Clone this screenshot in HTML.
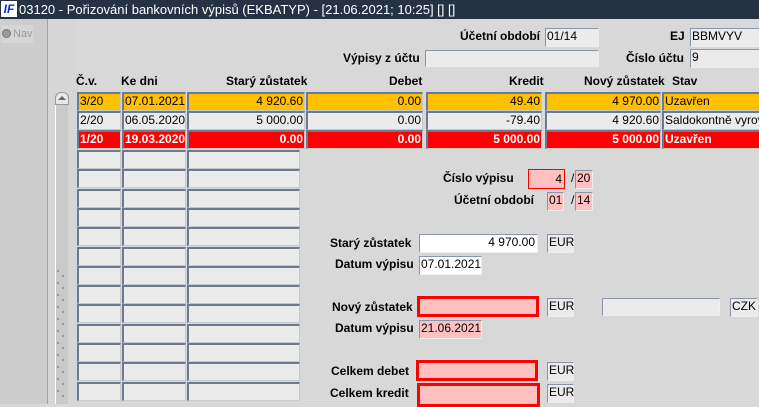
<!DOCTYPE html><html><head><meta charset="utf-8"><style>
*{margin:0;padding:0;box-sizing:border-box}
body{width:759px;height:404px;overflow:hidden;background:#d8d8d8;font-family:"Liberation Sans",sans-serif;font-size:12px;position:relative;color:#000}
.a{position:absolute}
.t{position:absolute;top:0;left:0;width:759px;height:19px;background:#243244;color:#fff;font-size:13px;line-height:19px;padding-left:19px;white-space:nowrap}
.lg{position:absolute;left:1px;top:1px;width:16px;height:16px;background:#fff;color:#1030c0;font:bold italic 12px "Liberation Sans";line-height:16px;text-align:center}
.c{position:absolute;height:19px;border-top:2px solid #6b7a90;border-left:2px solid #6b7a90;border-right:1px solid #c8c8c8;border-bottom:1px solid #c8c8c8;background:#ebebeb;line-height:15px;padding:0 1px;white-space:nowrap;overflow:visible}
.r{text-align:right}
.y{background:#ffc000}
.rd{background:#ff0000;color:#fff;font-weight:bold}
.b{font-weight:bold;position:absolute;white-space:nowrap}
.pk{background:#ffc0c0}
.red3{position:absolute;border:3px solid #f00;background:#ffc0c0}
.f{border-width:1px;border-color:#8a96a8 #eee #eee #8a96a8;padding:0 1px}
</style></head><body>
<div class="t"><div class="lg">IF</div>03120 - Pořizování bankovních výpisů (EKBATYP) - [21.06.2021; 10:25] [] []</div>
<div class="a" style="left:0;top:19px;width:47px;height:385px;background:#cdcdcd"></div>
<div class="a" style="left:47px;top:19px;width:1px;height:385px;background:#9aa4b0"></div>
<div class="a" style="left:1px;top:25px;width:32px;height:18px;background:#d6d6d6;color:#999;line-height:18px;font-size:11px;white-space:nowrap"><span style="display:inline-block;width:9px;height:9px;border-radius:50%;background:#999;border:1px solid #777;vertical-align:-1px;margin:0 2px 0 1px"></span>Nav</div>
<div class="a" style="left:48px;top:19px;width:29px;height:385px;background:#d6d6d6"></div>
<div class="a" style="left:55px;top:104px;width:1px;height:300px;background:#fff"></div>
<div class="a" style="left:56px;top:104px;width:12px;height:300px;background:#c9c9c9"></div>
<div class="a" style="left:55px;top:92px;width:14px;height:13px;background:#e8e8e8;border:1px solid #999;border-radius:6px 6px 0 0"><div style="margin:3px auto 0;width:0;height:0;border-left:4px solid transparent;border-right:4px solid transparent;border-bottom:4px solid #5a6a80"></div></div>
<svg class="a" style="left:57px;top:270px" width="10" height="134">
<g fill="#999">
<rect x="0" y="0" width="2" height="2"/><rect x="5" y="5" width="2" height="2"/><rect x="0" y="12" width="2" height="2"/><rect x="5" y="17" width="2" height="2"/><rect x="0" y="24" width="2" height="2"/><rect x="5" y="29" width="2" height="2"/><rect x="0" y="36" width="2" height="2"/><rect x="5" y="41" width="2" height="2"/><rect x="0" y="48" width="2" height="2"/><rect x="5" y="53" width="2" height="2"/><rect x="0" y="60" width="2" height="2"/><rect x="5" y="65" width="2" height="2"/><rect x="0" y="72" width="2" height="2"/><rect x="5" y="77" width="2" height="2"/><rect x="0" y="84" width="2" height="2"/><rect x="5" y="89" width="2" height="2"/><rect x="0" y="96" width="2" height="2"/><rect x="5" y="101" width="2" height="2"/><rect x="0" y="108" width="2" height="2"/><rect x="5" y="113" width="2" height="2"/><rect x="0" y="120" width="2" height="2"/><rect x="5" y="125" width="2" height="2"/></g></svg>

<div class="b" style="left:460px;top:29px">Účetní období</div>
<div class="c f" style="left:545px;top:28px;width:54px">01/14</div>
<div class="b" style="left:670px;top:29px">EJ</div>
<div class="c f" style="left:690px;top:28px;width:72px">BBMVYV</div>
<div class="b" style="left:343px;top:51px">Výpisy z účtu</div>
<div class="c f" style="left:425px;top:50px;width:174px;height:17px"></div>
<div class="b" style="left:626px;top:51px">Číslo účtu</div>
<div class="c f" style="left:690px;top:49px;width:72px">9</div>

<div class="b" style="left:76px;top:74px">Č.v.</div>
<div class="b" style="left:121px;top:74px">Ke dni</div>
<div class="b" style="left:226px;top:74px">Starý zůstatek</div>
<div class="b" style="left:389px;top:74px">Debet</div>
<div class="b" style="left:509px;top:74px">Kredit</div>
<div class="b" style="left:584px;top:74px">Nový zůstatek</div>
<div class="b" style="left:672px;top:74px">Stav</div>

<div class="c y" style="left:77px;top:92px;width:44px">3/20</div>
<div class="c y" style="left:122px;top:92px;width:64px">07.01.2021</div>
<div class="c y r" style="left:187px;top:92px;width:118px">4 920.60</div>
<div class="c y r" style="left:306px;top:92px;width:117px">0.00</div>
<div class="c y r" style="left:426px;top:92px;width:116px">49.40</div>
<div class="c y r" style="left:545px;top:92px;width:116px">4 970.00</div>
<div class="c y" style="left:662px;top:92px;width:100px;overflow:hidden">Uzavřen</div>

<div class="c" style="left:77px;top:111px;width:44px">2/20</div>
<div class="c" style="left:122px;top:111px;width:64px">06.05.2020</div>
<div class="c r" style="left:187px;top:111px;width:118px">5 000.00</div>
<div class="c r" style="left:306px;top:111px;width:117px">0.00</div>
<div class="c r" style="left:426px;top:111px;width:116px">-79.40</div>
<div class="c r" style="left:545px;top:111px;width:116px">4 920.60</div>
<div class="c" style="left:662px;top:111px;width:100px;overflow:hidden">Saldokontně vyrovnán</div>

<div class="c rd" style="left:77px;top:130px;width:44px">1/20</div>
<div class="c rd" style="left:122px;top:130px;width:64px">19.03.2020</div>
<div class="c rd r" style="left:187px;top:130px;width:118px">0.00</div>
<div class="c rd r" style="left:306px;top:130px;width:117px">0.00</div>
<div class="c rd r" style="left:426px;top:130px;width:116px">5 000.00</div>
<div class="c rd r" style="left:545px;top:130px;width:116px">5 000.00</div>
<div class="c rd" style="left:662px;top:130px;width:100px;overflow:hidden">Uzavřen</div>

<div id="er"></div>
<script>
var h='';for(var i=0;i<13;i++){var y=150+Math.round(i*19.3);h+='<div class="c" style="left:77px;top:'+y+'px;width:44px"></div><div class="c" style="left:122px;top:'+y+'px;width:64px"></div><div class="c" style="left:187px;top:'+y+'px;width:113px"></div>';}
document.getElementById('er').innerHTML=h;
</script>

<div class="b" style="left:443px;top:171px">Číslo výpisu</div>
<div class="a pk r" style="left:528px;top:169px;width:37px;height:20px;border:1px solid #f00;padding:3px 2px;line-height:13px">4</div>
<div class="a" style="left:571px;top:171px">/</div>
<div class="c pk f" style="left:575px;top:170px;width:18px">20</div>
<div class="b" style="left:454px;top:193px">Účetní období</div>
<div class="c pk f" style="left:547px;top:192px;width:17px">01</div>
<div class="a" style="left:571px;top:193px">/</div>
<div class="c pk f" style="left:575px;top:192px;width:18px">14</div>

<div class="b" style="left:330px;top:236px">Starý zůstatek</div>
<div class="c r f" style="left:419px;top:234px;width:119px;background:#fff;padding-right:2px">4 970.00</div>
<div class="c f" style="left:547px;top:234px;width:27px">EUR</div>
<div class="b" style="left:335px;top:257px">Datum výpisu</div>
<div class="c f" style="left:419px;top:256px;width:63px;background:#fff">07.01.2021</div>

<div class="b" style="left:332px;top:300px">Nový zůstatek</div>
<div class="red3" style="left:417px;top:296px;width:122px;height:21px"></div>
<div class="c f" style="left:547px;top:298px;width:27px">EUR</div>
<div class="c f" style="left:602px;top:298px;width:118px;height:18px"></div>
<div class="c f" style="left:730px;top:298px;width:28px">CZK</div>
<div class="b" style="left:335px;top:321px">Datum výpisu</div>
<div class="c pk f" style="left:419px;top:320px;width:63px">21.06.2021</div>

<div class="b" style="left:331px;top:364px">Celkem debet</div>
<div class="red3" style="left:416px;top:360px;width:122px;height:21px"></div>
<div class="c f" style="left:547px;top:362px;width:27px">EUR</div>
<div class="b" style="left:330px;top:386px">Celkem kredit</div>
<div class="red3" style="left:417px;top:383px;width:123px;height:24px"></div>
<div class="c f" style="left:547px;top:384px;width:27px">EUR</div>
</body></html>
